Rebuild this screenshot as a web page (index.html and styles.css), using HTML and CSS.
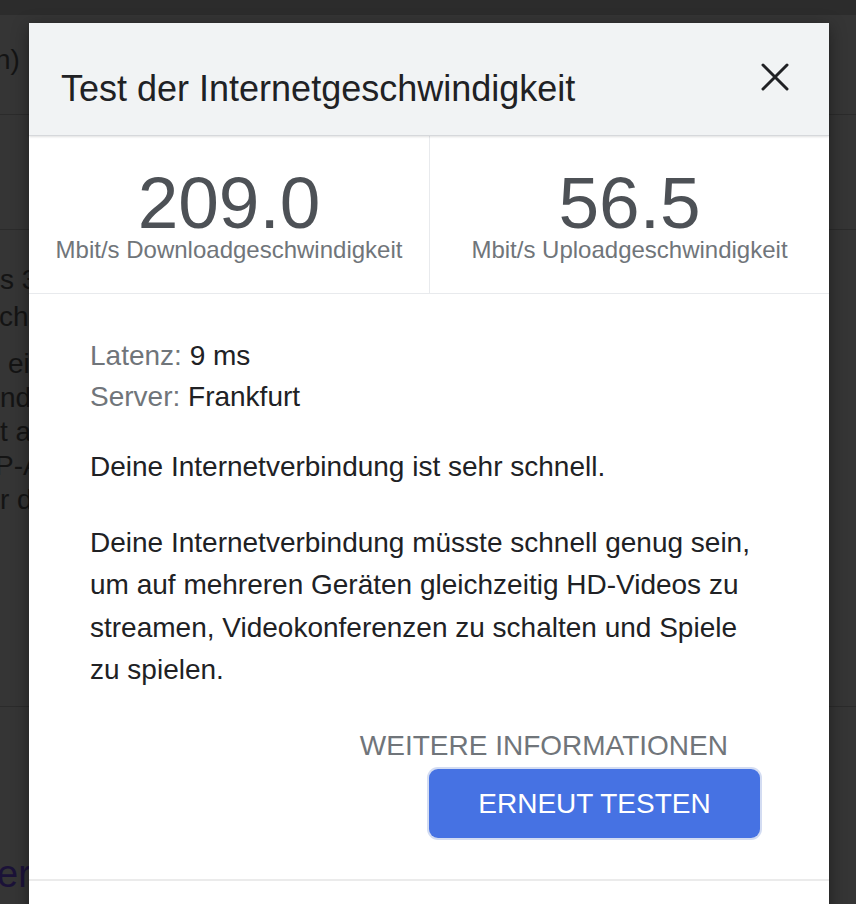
FILE: index.html
```html
<!DOCTYPE html>
<html lang="de">
<head>
<meta charset="utf-8">
<title>Test der Internetgeschwindigkeit</title>
<link rel="stylesheet" href="styles.css">
</head>
<body>
<div class="page">
  <div class="topbar"></div>
  <div class="sec sec1"><div class="bgline cut">n)</div></div>
  <div class="sec sec2"></div>
  <div class="sec sec3">
    <div class="bgline">s 3 Mbit/s</div>
    <div class="bgline cut2">chnell</div>
    <div class="para">
      <div class="bgline ind">ei</div>
      <div class="bgline">nd</div>
      <div class="bgline">t a</div>
      <div class="bgline cut">P-A</div>
      <div class="bgline">r di</div>
    </div>
  </div>
  <div class="sec sec4"><div class="bigline">er</div></div>
</div>

<div class="modal" role="dialog">
  <div class="modal-head">
    <h1 class="title">Test der Internetgeschwindigkeit</h1>
    <svg class="close" width="28" height="28" viewBox="0 0 28 28" aria-label="Schließen">
      <path d="M2 2 L26 26 M26 2 L2 26" stroke="#202124" stroke-width="3" stroke-linecap="round" fill="none"/>
    </svg>
  </div>
  <div class="stats">
    <div class="stat">
      <div class="num">209.0</div>
      <div class="unit">Mbit/s Downloadgeschwindigkeit</div>
    </div>
    <div class="stat">
      <div class="num">56.5</div>
      <div class="unit">Mbit/s Uploadgeschwindigkeit</div>
    </div>
  </div>
  <div class="modal-body">
    <div class="meta">
      <div><span class="k">Latenz:</span> 9 ms</div>
      <div><span class="k">Server:</span> Frankfurt</div>
    </div>
    <p class="verdict">Deine Internetverbindung ist sehr schnell.</p>
    <p class="desc">Deine Internetverbindung müsste schnell genug sein, um auf mehreren Geräten gleichzeitig HD-Videos zu streamen, Videokonferenzen zu schalten und Spiele zu spielen.</p>
    <div class="actions">
      <a class="more">WEITERE INFORMATIONEN</a>
      <button class="retest">ERNEUT TESTEN</button>
    </div>
  </div>
  <div class="modal-foot"></div>
</div>
</body>
</html>
```
FILE: styles.css
```css
html, body {
  margin: 0;
  padding: 0;
  height: 904px;
  overflow: hidden;
}
body {
  background: #353535;
  font-family: "Liberation Sans", Arial, sans-serif;
  position: relative;
}
.page {
  width: 856px;
}
.topbar {
  height: 15px;
  background: #2c2c2c;
}
.sec {
  border-bottom: 1px solid #2b2b2b;
}
.sec1 {
  height: 100px;
  box-sizing: border-box;
  padding-top: 26px;
}
.sec2 {
  height: 114px;
}
.sec3 {
  height: 477px;
  box-sizing: border-box;
  padding-top: 31px;
}
.sec4 {
  height: 200px;
  box-sizing: border-box;
  padding-top: 145px;
}
.bgline {
  font-size: 28px;
  line-height: 37px;
  color: #141414;
  white-space: nowrap;
}
.cut { margin-left: -5px; }
.cut2 { margin-left: -1px; }
.ind { margin-left: 8px; }
.para {
  margin-top: 12px;
}
.para .bgline {
  line-height: 34px;
}
.bigline {
  font-size: 38px;
  line-height: 44px;
  color: #1b1238;
  margin-left: -3px;
}

.modal {
  position: absolute;
  left: 29px;
  top: 23px;
  width: 800px;
  height: 900px;
  background: #ffffff;
  box-shadow: 0 4px 16px rgba(0,0,0,0.4);
  color: #202124;
}
.modal-head {
  height: 113px;
  box-sizing: border-box;
  background: #f1f3f4;
  border-bottom: 1px solid #d6d8db;
  box-shadow: 0 1px 2px rgba(0,0,0,0.12);
  display: flex;
  justify-content: space-between;
  align-items: flex-start;
  padding: 0 40px 0 32px;
  position: relative;
}
.title {
  margin: 46px 0 0 0;
  font-size: 36px;
  line-height: 40px;
  font-weight: normal;
  color: #202124;
}
.close {
  margin-top: 40px;
  display: block;
}
.stats {
  display: grid;
  grid-template-columns: 1fr 1fr;
  border-bottom: 1px solid #e8eaed;
}
.stat {
  text-align: center;
  padding: 30px 0 29px;
}
.stat + .stat {
  border-left: 1px solid #e8eaed;
}
.num {
  font-size: 73px;
  line-height: 73px;
  color: #4d5156;
}
.unit {
  margin-top: -3px;
  font-size: 24px;
  line-height: 28px;
  color: #70757a;
}
.modal-body {
  padding: 41px 69px 0 61px;
  font-size: 28px;
  line-height: 41px;
}
.k {
  color: #70757a;
}
.verdict {
  margin: 29px 0 0;
  line-height: 42px;
}
.desc {
  margin: 34px 0 0;
  line-height: 42.3px;
}
.actions {
  margin-top: 34px;
  display: flex;
  flex-direction: column;
  align-items: flex-end;
}
.more {
  font-size: 28px;
  line-height: 42px;
  color: #70757a;
  margin-right: 32px;
}
.retest {
  margin-top: 2px;
  width: 331px;
  height: 69px;
  border: none;
  border-radius: 9px;
  background: #4672e3;
  box-shadow: 0 0 0 2px #d3dcf2;
  color: #ffffff;
  font-family: "Liberation Sans", Arial, sans-serif;
  font-size: 28px;
}
.modal-foot {
  margin-top: 41px;
  border-top: 2px solid #ebebeb;
}
```
